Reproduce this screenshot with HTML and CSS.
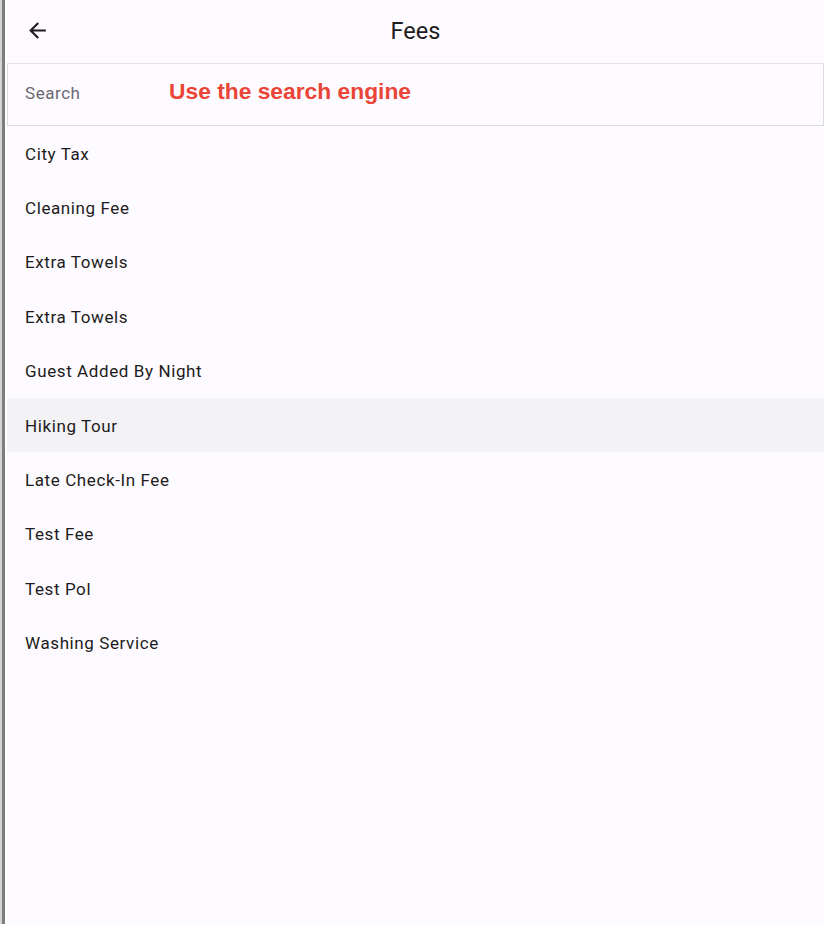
FILE: index.html
```html
<!DOCTYPE html>
<html>
<head>
<meta charset="utf-8">
<link rel="stylesheet" href="styles.css">
</head>
<body>
<div class="screen">
  <div class="behind"></div>
  <div class="panel">
    <header class="appbar">
      <button class="back" aria-label="Back">
        <svg viewBox="0 0 24 24" width="25" height="25"><path d="M20 11H7.83l5.59-5.59L12 4l-8 8 8 8 1.41-1.41L7.83 13H20v-2z" fill="#1d1b20"/></svg>
      </button>
      <h1 class="title">Fees</h1>
    </header>
    <div class="search">
      <span class="placeholder">Search</span>
      <span class="note">Use the search engine</span>
    </div>
    <ul class="list">
      <li>City Tax</li>
      <li>Cleaning Fee</li>
      <li>Extra Towels</li>
      <li>Extra Towels</li>
      <li>Guest Added By Night</li>
      <li class="hover">Hiking Tour</li>
      <li>Late Check-In Fee</li>
      <li>Test Fee</li>
      <li>Test Pol</li>
      <li>Washing Service</li>
    </ul>
  </div>
</div>
</body>
</html>
```
FILE: styles.css
```css
html, body {
  margin: 0;
  padding: 0;
  background: #ffffff;
}
body {
  font-family: Roboto, "Liberation Sans", sans-serif;
  width: 828px;
  height: 940px;
  overflow: hidden;
}
.screen {
  display: flex;
  height: 924px;
  width: 824px;
}
.behind {
  width: 5px;
  flex: none;
  background: linear-gradient(to right, #d4d4d4 0, #d4d4d4 2px, #7d7d7d 2px, #7d7d7d 6px);
  margin-right: 2px;
}
.panel {
  flex: 1;
  background: #fdfbff;
  display: flex;
  flex-direction: column;
}
.appbar {
  height: 64px;
  display: flex;
  align-items: center;
  position: relative;
  border-bottom: 1px solid #e3e2e6;
  box-sizing: border-box;
  padding-bottom: 2px;
}
.back {
  margin-left: 18px;
  width: 25px;
  height: 25px;
  padding: 0;
  border: 0;
  background: none;
  display: flex;
}
.title {
  position: absolute;
  left: 0;
  right: 0;
  top: 0;
  margin: 0;
  text-align: center;
  font-weight: 400;
  font-size: 23.5px;
  line-height: 62px;
  color: #1d1b20;
}
.search {
  height: 62px;
  box-sizing: border-box;
  border: 1px solid #dcdbdf;
  border-top: 0;
  display: flex;
  align-items: center;
  padding-left: 17px;
}
.placeholder {
  font-size: 17px;
  color: #6b6970;
  letter-spacing: 0.55px;
  width: 144px;
  padding-bottom: 4px;
}
.note {
  font-family: "Liberation Sans", Arial, sans-serif;
  font-weight: 700;
  font-size: 22.8px;
  color: #ea4536;
  padding-bottom: 7px;
}
.list {
  list-style: none;
  margin: 0;
  padding: 0;
}
.list li {
  height: 54.4px;
  display: flex;
  align-items: center;
  padding-left: 18px;
  padding-top: 1px;
  box-sizing: border-box;
  font-size: 17px;
  letter-spacing: 0.6px;
  color: #1d1b20;
}
.list li.hover {
  background: #f3f2f5;
}
```
